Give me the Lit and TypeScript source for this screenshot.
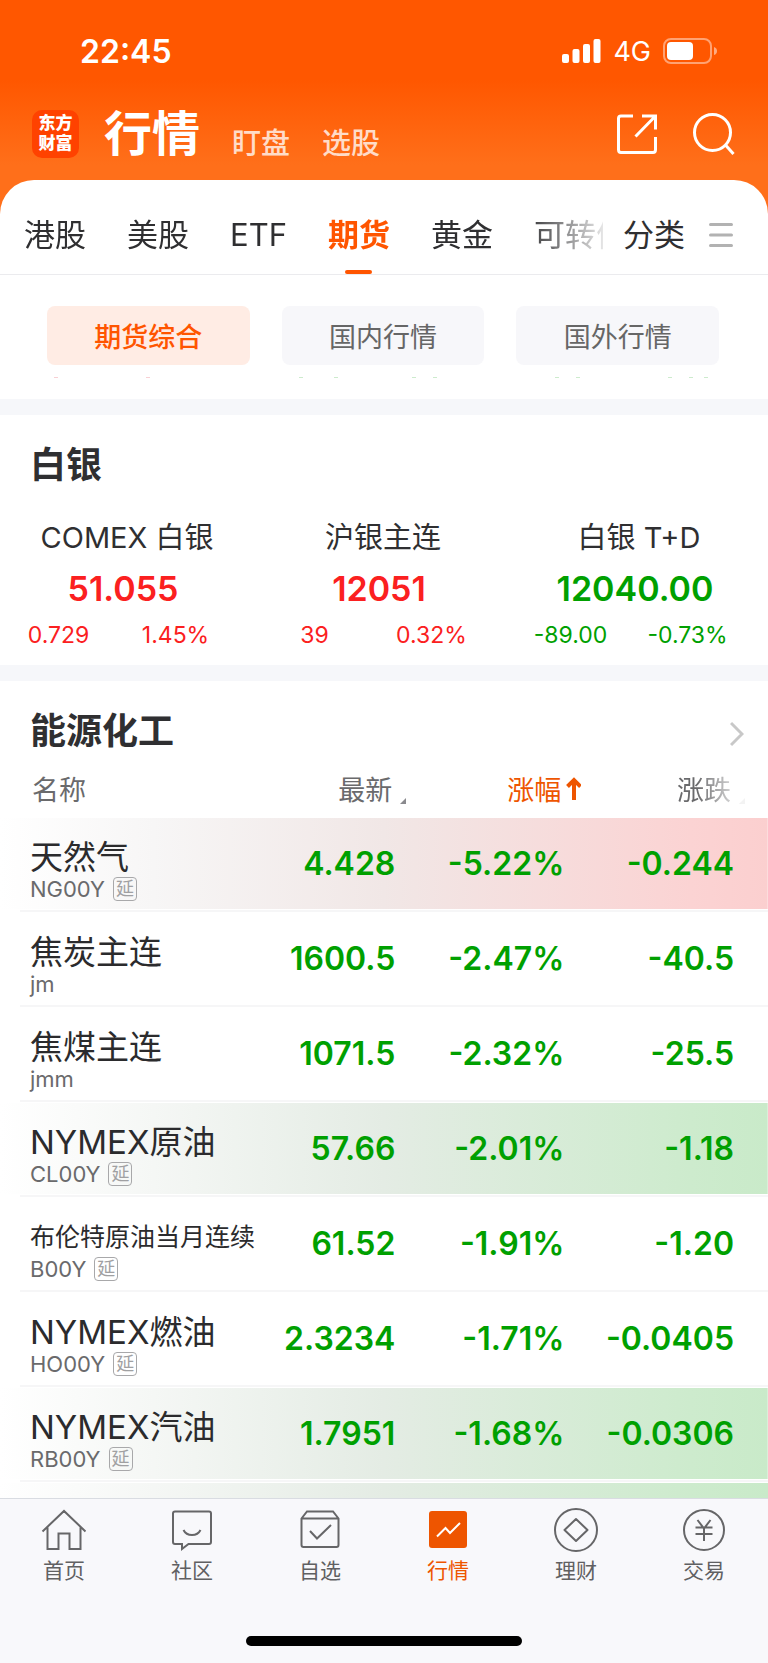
import { LitElement, html, css, svg, nothing } from "lit";
import { customElement, property } from "lit/decorators.js";
import { classMap } from "lit/directives/class-map.js";

interface Quote {
  name: string;
  code: string;
  delayed?: boolean;
  last: string;
  pct: string;
  diff: string;
  flash?: "up" | "down";
}

interface Metal {
  name: string;
  price: string;
  diff: string;
  pct: string;
  up: boolean;
}

const METALS: Metal[] = [
  { name: "COMEX 白银", price: "51.055", diff: "0.729", pct: "1.45%", up: true },
  { name: "沪银主连", price: "12051", diff: "39", pct: "0.32%", up: true },
  { name: "白银 T+D", price: "12040.00", diff: "-89.00", pct: "-0.73%", up: false },
];

const QUOTES: Quote[] = [
  { name: "天然气", code: "NG00Y", delayed: true, last: "4.428", pct: "-5.22%", diff: "-0.244", flash: "up" },
  { name: "焦炭主连", code: "jm", last: "1600.5", pct: "-2.47%", diff: "-40.5" },
  { name: "焦煤主连", code: "jmm", last: "1071.5", pct: "-2.32%", diff: "-25.5" },
  { name: "NYMEX原油", code: "CL00Y", delayed: true, last: "57.66", pct: "-2.01%", diff: "-1.18", flash: "down" },
  { name: "布伦特原油当月连续", code: "B00Y", delayed: true, last: "61.52", pct: "-1.91%", diff: "-1.20" },
  { name: "NYMEX燃油", code: "HO00Y", delayed: true, last: "2.3234", pct: "-1.71%", diff: "-0.0405" },
  { name: "NYMEX汽油", code: "RB00Y", delayed: true, last: "1.7951", pct: "-1.68%", diff: "-0.0306", flash: "down" },
];

const TABS = ["港股", "美股", "ETF", "期货", "黄金", "可转债"];
const CHIPS = ["期货综合", "国内行情", "国外行情"];

const base = css`
  * {
    box-sizing: border-box;
  }
  button {
    font: inherit;
    color: inherit;
    background: none;
    border: 0;
    padding: 0;
    margin: 0;
    cursor: pointer;
    white-space: nowrap;
  }
  a {
    color: inherit;
    text-decoration: none;
  }
  svg {
    display: block;
    flex: none;
  }
`;

@customElement("market-header")
class MarketHeader extends LitElement {
  static styles = [
    base,
    css`
      :host {
        display: block;
        color: #fff;
      }
      .status {
        display: flex;
        align-items: center;
        height: 102px;
        padding: 0 51px 0 80px;
      }
      .time {
        flex: 1;
        font-size: 32px;
        font-weight: 600;
      }
      .net {
        font-size: 27px;
        margin: 0 12px;
      }
      .bar {
        display: flex;
        align-items: center;
        height: 78px;
        padding: 0 33px 14px 32px;
      }
      .logo {
        width: 47px;
        height: 48px;
        border-radius: 10px;
        background: #ff4200;
        font-size: 17px;
        line-height: 20px;
        font-weight: 900;
        text-align: center;
        padding-top: 3px;
      }
      .title {
        font-size: 48px;
        line-height: 64px;
        font-weight: 700;
        margin: 0 0 0 25px;
      }
      .links {
        flex: 1;
        display: flex;
        gap: 32px;
        padding: 14px 0 0 32px;
        font-size: 29px;
        font-weight: 500;
        color: #ffdcc8;
      }
      .tools {
        display: flex;
        gap: 36px;
      }
    `,
  ];

  render() {
    return html`
      <div class="status">
        <span class="time">22:45</span>
        <svg width="39" height="25" viewBox="0 0 39 25" fill="#fff">
          <rect x="0" y="15" width="7" height="9" rx="2" />
          <rect x="10.500" y="10" width="7" height="14" rx="2" />
          <rect x="21" y="5" width="7" height="19" rx="2" />
          <rect x="31.500" y="0" width="7" height="24" rx="2" />
        </svg>
        <span class="net">4G</span>
        <svg width="54" height="26" viewBox="0 0 54 26">
          <rect x="1" y="1" width="47" height="24" rx="7" fill="none" stroke="#fff" stroke-opacity=".45" stroke-width="2" />
          <rect x="4" y="4" width="26" height="18" rx="4" fill="#fff" />
          <path d="M51 9q3 1 3 4t-3 4z" fill="#fff" fill-opacity=".5" />
        </svg>
      </div>
      <div class="bar">
        <div class="logo">东方<br />财富</div>
        <h1 class="title">行情</h1>
        <nav class="links"><a href="#watch">盯盘</a><a href="#pick">选股</a></nav>
        <div class="tools">
          <button aria-label="分享">
            <svg width="40" height="40" viewBox="0 0 40 40" fill="none" stroke="#fff" stroke-width="3">
              <path d="M16 2H4Q1.500 2 1.500 4.500V35.500Q1.500 38.500 4 38.500H36Q38.500 38.500 38.500 35.500V23M25 2H38.500V15.500M38 2.500L18.500 22.500" />
            </svg>
          </button>
          <button aria-label="搜索">
            <svg width="42" height="42" viewBox="0 0 42 42" fill="none" stroke="#fff" stroke-width="3">
              <circle cx="19.500" cy="19.500" r="18" />
              <path d="M32.500 32L40.500 41" />
            </svg>
          </button>
        </div>
      </div>
    `;
  }
}

@customElement("category-tabs")
class CategoryTabs extends LitElement {
  static styles = [
    base,
    css`
      :host {
        display: block;
      }
      .row {
        display: flex;
        height: 95px;
        border-bottom: 1px solid #ebebee;
        font-size: 31px;
        line-height: 74px;
        padding-top: 18px;
        color: #2f2f31;
      }
      .scroll {
        flex: 1;
        min-width: 0;
        overflow: hidden;
        display: flex;
        gap: 41px;
        padding-left: 24px;
        mask-image: linear-gradient(to left, rgba(0, 0, 0, 0.12), #000 78px);
      }
      .tab {
        flex: none;
        display: flex;
        flex-direction: column;
        align-items: center;
        height: 76px;
      }
      .tab.on {
        color: #ff5500;
        font-weight: 700;
      }
      .tab.on::after {
        content: "";
        width: 27px;
        height: 4px;
        margin-top: -2px;
        border-radius: 2px;
        background: #ff5500;
      }
      .side {
        display: flex;
        align-items: center;
        height: 74px;
        gap: 24px;
        padding: 0 35px 0 20px;
      }
      .chips {
        display: grid;
        grid-template-columns: repeat(3, 1fr);
        gap: 32px;
        padding: 31px 49px 11px 47px;
      }
      .chip {
        height: 59px;
        border-radius: 8px;
        background: #f7f7fa;
        color: #666;
        font-size: 27px;
      }
      .chip.on {
        background: #ffece4;
        color: #ff5500;
        font-weight: 500;
      }
      .peek {
        width: 100%;
        height: 3px;
        margin-bottom: 20px;
      }
    `,
  ];

  render() {
    return html`
      <div class="row">
        <div class="scroll">
          ${TABS.map((t) => html`<button class=${classMap({ tab: true, on: t === "期货" })}>${t}</button>`)}
        </div>
        <button class="side">
          分类
          <svg width="24" height="24" viewBox="0 0 24 24" stroke="#b2b2b2" stroke-width="3" stroke-linecap="round">
            <path d="M1.500 1.500H22.500M1.500 12H22.500M1.500 22.500H22.500" />
          </svg>
        </button>
      </div>
      <div class="chips">
        ${CHIPS.map((c, i) => html`<button class=${classMap({ chip: true, on: i === 0 })}>${c}</button>`)}
      </div>
      <svg class="peek" viewBox="0 0 768 3" preserveAspectRatio="none" stroke-width="1">
        <path stroke="#f8d0d4" d="M54 1.500h4M146 1.500h4" />
        <path stroke="#cdebcd" d="M299 1.500h4M334 1.500h4M412 1.500h4M433 1.500h4M555 1.500h4M576 1.500h4M668 1.500h4M689 1.500h4M704 1.500h4" />
      </svg>
    `;
  }
}

@customElement("metal-card")
class MetalCard extends LitElement {
  @property({ attribute: false }) data!: Metal;

  static styles = [
    base,
    css`
      :host {
        display: block;
        text-align: center;
        color: #00a000;
      }
      .up {
        color: #fb2020;
      }
      .name {
        font-size: 29px;
        line-height: 40px;
        padding-right: 2px;
        color: #2f2f31;
      }
      .price {
        font-size: 34px;
        line-height: 44px;
        font-weight: 600;
        margin-top: 9px;
        padding-right: 10px;
      }
      .change {
        display: grid;
        grid-template-columns: 1fr 1fr;
        font-size: 23px;
        line-height: 28px;
        margin-top: 10px;
        padding-right: 22px;
      }
    `,
  ];

  render() {
    const d = this.data;
    return html`<div class=${d.up ? "up" : ""}>
      <div class="name">${d.name}</div>
      <div class="price">${d.price}</div>
      <div class="change"><span>${d.diff}</span><span>${d.pct}</span></div>
    </div>`;
  }
}

@customElement("quote-table")
class QuoteTable extends LitElement {
  static styles = [
    base,
    css`
      :host {
        display: block;
      }
      table {
        width: 100%;
        table-layout: fixed;
        border-collapse: collapse;
      }
      .c-name {
        width: 33%;
      }
      .c-last {
        width: 19%;
      }
      .c-pct {
        width: 22%;
      }
      th {
        height: 62px;
        padding: 4px 4px 0 0;
        font-size: 27px;
        font-weight: 400;
        text-align: right;
        color: #6a6a6c;
      }
      td {
        height: 95px;
        padding: 0 4px 2px 0;
        vertical-align: middle;
        text-align: right;
        font-size: 32px;
        font-weight: 600;
        color: #00a000;
        white-space: nowrap;
      }
      th:first-child {
        text-align: left;
        padding-left: 32px;
      }
      td:first-child {
        text-align: left;
        padding: 8px 0 0 30px;
        font-weight: 400;
      }
      th:last-child,
      td:last-child {
        padding-right: 34px;
      }
      .sort {
        display: inline-flex;
        align-items: center;
        margin-right: -17px;
      }
      .sort.active {
        color: #ee5500;
      }
      .sort.faded {
        mask-image: linear-gradient(to left, rgba(0, 0, 0, 0.1) 10px, #000 54px);
      }
      .row {
        --tint: linear-gradient(#fff, #fff);
        background:
          var(--tint) 0 1px / 100% 91px no-repeat,
          linear-gradient(#f6f6f7, #f6f6f7) 20px 93px / 100% 2px no-repeat;
      }
      .row.up {
        --tint: linear-gradient(90deg, #fff, #f7f6f6 20%, #f1e7e6 50%, #fbd3d3 90%, #fbcfcf);
      }
      .row.down {
        --tint: linear-gradient(90deg, #fff, #f5f7f5 20%, #e4ece4 50%, #cdebcd 90%, #c9eac9);
      }
      .name {
        font-size: 33px;
        line-height: 40px;
        color: #2b2b2d;
      }
      .name.long {
        font-size: 25px;
      }
      .meta {
        display: flex;
        align-items: center;
        gap: 8px;
        height: 24px;
        font-size: 22px;
        color: #6a6a6c;
      }
      .delay {
        width: 24px;
        height: 24px;
        border: 1px solid #a8a8aa;
        border-radius: 4px;
        font-size: 18px;
        line-height: 21px;
        text-align: center;
        color: #a0a0a2;
      }
    `,
  ];

  private corner = html`<svg width="20" height="32" viewBox="0 0 20 32"><path d="M14 26V34H6z" fill="#8a8a8e" /></svg>`;
  private arrow = html`<svg width="20" height="32" viewBox="0 0 20 32" fill="none" stroke="#ee5500" stroke-width="4">
    <path d="M13 28V8M6.500 14.500L13 8L19.500 14.500" />
  </svg>`;

  render() {
    return html`
      <table>
        <colgroup>
          <col class="c-name" />
          <col class="c-last" />
          <col class="c-pct" />
          <col />
        </colgroup>
        <thead>
          <tr>
            <th scope="col">名称</th>
            <th scope="col"><button class="sort">最新${this.corner}</button></th>
            <th scope="col" aria-sort="ascending"><button class="sort active">涨幅${this.arrow}</button></th>
            <th scope="col"><button class="sort faded">涨跌${this.corner}</button></th>
          </tr>
        </thead>
        <tbody>
          ${QUOTES.map(
            (q) => html`<tr class=${classMap({ row: true, up: q.flash === "up", down: q.flash === "down" })}>
              <td>
                <div class=${classMap({ name: true, long: q.name.length > 8 })}>${q.name}</div>
                <div class="meta">${q.code}${q.delayed ? html`<span class="delay">延</span>` : nothing}</div>
              </td>
              <td>${q.last}</td>
              <td>${q.pct}</td>
              <td>${q.diff}</td>
            </tr>`
          )}
          <tr class="row down"><td colspan="4"></td></tr>
        </tbody>
      </table>
    `;
  }
}

const NAV = [
  {
    label: "首页",
    icon: svg`<path d="M1.500 22.500L23 2L44.500 22.500M6.500 18.500V40H17.500V24.500H28.500V40H39.500V18.500" />`,
  },
  {
    label: "社区",
    icon: svg`<path d="M6 2.500H40Q42 2.500 42 4.500V33Q42 35 40 35H19.500L13 40V35H6Q4 35 4 33V4.500Q4 2.500 6 2.500zM14.500 21Q17 26 23 26T31.500 21" />`,
  },
  {
    label: "自选",
    icon: svg`<path d="M4.500 9.500L10 2.500H36L41.500 9.500V36Q41.500 38 39.500 38H6.500Q4.500 38 4.500 36zM4.500 9.500H41.500M13 22L20 29.500L34 16" />`,
  },
  {
    label: "行情",
    active: true,
    icon: svg`<rect x="4" y="2" width="38" height="37" rx="3" fill="#ee5500" stroke="none" /><path stroke="#fff" d="M12 27.500L20.500 19L25 24L35 14" />`,
  },
  {
    label: "理财",
    icon: svg`<circle cx="23" cy="21" r="21" /><path stroke-linejoin="round" d="M23 10L34.500 21L23 32L11.500 21z" />`,
  },
  {
    label: "交易",
    icon: svg`<circle cx="23" cy="21" r="20" /><path d="M16.500 11L23 19.500L29.500 11M23 19.500V32M14.500 18.500H31.500M14.500 25H31.500" />`,
  },
];

@customElement("bottom-nav")
class BottomNav extends LitElement {
  static styles = [
    base,
    css`
      :host {
        display: flex;
        flex-direction: column;
        align-items: center;
        height: 165px;
        background: #f8f8fb;
        border-top: 1px solid #d9dce2;
      }
      nav {
        display: grid;
        grid-template-columns: repeat(6, 1fr);
        width: 100%;
        flex: 1;
      }
      a {
        display: flex;
        flex-direction: column;
        align-items: center;
        padding-top: 10px;
        font-size: 21px;
        line-height: 28px;
        color: #606062;
      }
      .on {
        color: #ee5500;
      }
      svg {
        margin-bottom: 6px;
      }
      .home {
        width: 36%;
        height: 10px;
        border-radius: 5px;
        background: #000;
        margin-bottom: 17px;
      }
    `,
  ];

  render() {
    return html`
      <nav>
        ${NAV.map(
          (n) => html`<a href="#" class=${n.active ? "on" : ""}>
            <svg width="46" height="42" viewBox="0 0 46 42" overflow="visible" fill="none" stroke="#666668" stroke-width="2">
              ${n.icon}
            </svg>
            ${n.label}
          </a>`
        )}
      </nav>
      <div class="home"></div>
    `;
  }
}

@customElement("app-root")
class AppRoot extends LitElement {
  static styles = [
    base,
    css`
      :host {
        display: flex;
        flex-direction: column;
        height: 100vh;
        overflow: hidden;
        font-family: Inter, "Noto Sans CJK SC", sans-serif;
        background: linear-gradient(#ff5700 80px, #ff6f1a 165px);
      }
      main {
        flex: 1;
        min-height: 0;
        overflow: hidden;
        background: #fff;
        border-radius: 34px 34px 0 0;
      }
      section {
        border-top: 16px solid #f6f7fa;
        padding-top: 26px;
      }
      .head {
        display: flex;
        align-items: center;
        justify-content: space-between;
        padding: 0 24px 0 30px;
      }
      .more {
        padding-top: 6px;
      }
      h2 {
        margin: 0;
        font-size: 36px;
        line-height: 48px;
        font-weight: 700;
        color: #2f2f31;
      }
      .metals {
        display: grid;
        grid-template-columns: repeat(3, 1fr);
        padding: 29px 0 16px;
      }
    `,
  ];

  render() {
    return html`
      <market-header></market-header>
      <main>
        <category-tabs></category-tabs>
        <section>
          <div class="head"><h2>白银</h2></div>
          <div class="metals">${METALS.map((m) => html`<metal-card .data=${m}></metal-card>`)}</div>
        </section>
        <section>
          <div class="head">
            <h2>能源化工</h2>
            <button class="more" aria-label="更多">
              <svg width="14" height="26" viewBox="0 0 14 26" fill="none" stroke="#c8c8c8" stroke-width="3">
                <path d="M1 2L12 13L1 24" />
              </svg>
            </button>
          </div>
          <quote-table></quote-table>
        </section>
      </main>
      <bottom-nav></bottom-nav>
    `;
  }
}
